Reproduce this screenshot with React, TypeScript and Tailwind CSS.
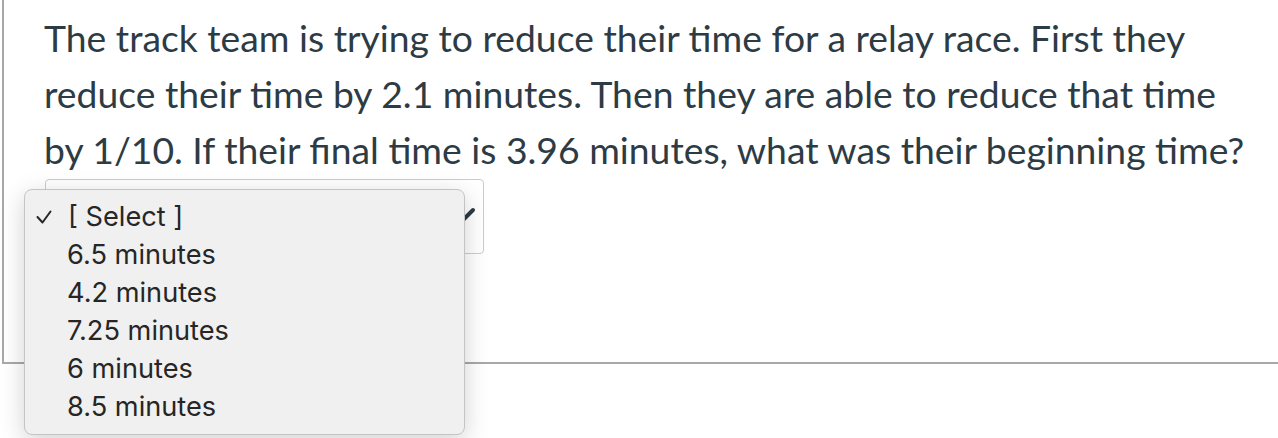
import React from "react";

const options = ["6.5 minutes", "4.2 minutes", "7.25 minutes", "6 minutes", "8.5 minutes"];

export default function App() {
  return (
    <div className="relative w-[1278px] h-[438px] overflow-hidden bg-white">
      <div className="ml-[2px] h-[364px] border-l-2 border-b-2 border-[#a8a8a8] pl-[40px] pt-[10px]">
        <p
          className="w-[1212px] text-[37.3px] leading-[56px] text-[#2d3b45]"
          style={{ fontFamily: "Lato, 'Open Sans', sans-serif" }}
        >
          The track team is trying to reduce their time for a relay race. First they reduce their time by 2.1
          minutes. Then they are able to reduce that time by 1/10. If their final time is 3.96 minutes, what
          was their beginning time?
        </p>
        <div className="relative ml-[1px] mt-[1px] h-[75px] w-[439px] rounded-[4px] border border-[#c7cdd1] bg-white">
          <svg className="absolute right-[7px] top-[27px]" width="24" height="16" viewBox="0 0 24 16">
            <path d="M3 3 L12 12 L21 3" fill="none" stroke="#2d3b45" strokeWidth="4" strokeLinecap="round" strokeLinejoin="round" />
          </svg>
        </div>
      </div>

      <div
        className="absolute left-[24px] top-[189px] w-[441px] h-[246px] rounded-[8px] border border-[#c4c4c4] bg-[#f0f0f0] pt-[8px] shadow-[0_6px_24px_rgba(0,0,0,0.18)]"
        style={{ fontFamily: "Inter, 'Liberation Sans', sans-serif" }}
      >
        <div className="flex h-[38px] items-center text-[27.2px] text-[#262626]">
          <span className="flex w-[43px] justify-start pl-[11px]">
            <svg width="16" height="14" viewBox="0 0 16 14">
              <path d="M1.5 7 L6.5 12.5 L14.5 1.5" fill="none" stroke="#262626" strokeWidth="2" strokeLinecap="round" strokeLinejoin="round" />
            </svg>
          </span>
          <span>[ Select ]</span>
        </div>
        {options.map((o) => (
          <div key={o} className="flex h-[38px] items-center pl-[42px] text-[27.2px] text-[#262626]">
            {o}
          </div>
        ))}
      </div>
    </div>
  );
}
